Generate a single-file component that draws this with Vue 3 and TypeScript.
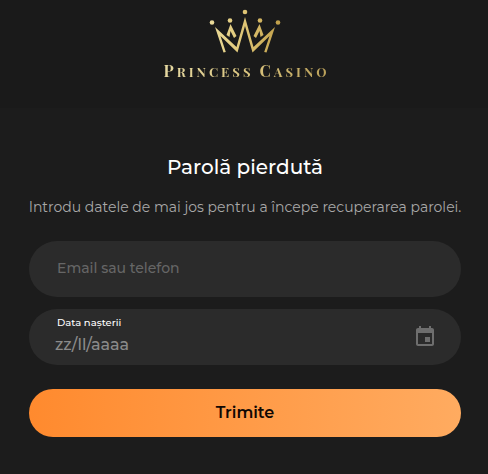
<script setup lang="ts">
import { ref } from 'vue'

const account = ref('')
const birthDate = ref('')
</script>

<template>
  <div class="page">
    <header class="header">
      <a class="brand" href="#">
        <svg class="crown" viewBox="0 0 72 44" aria-hidden="true">
          <defs>
            <linearGradient id="gold" gradientUnits="userSpaceOnUse" x1="2" y1="0" x2="70" y2="0">
              <stop offset="0" stop-color="#eadb9a" />
              <stop offset="0.5" stop-color="#dfc574" />
              <stop offset="1" stop-color="#c1a04a" />
            </linearGradient>
          </defs>
          <g fill="url(#gold)">
            <circle cx="3" cy="13.500" r="2.300" />
            <circle cx="21" cy="11.500" r="2.300" />
            <circle cx="36" cy="3" r="2.300" />
            <circle cx="51" cy="11.500" r="2.300" />
            <circle cx="69" cy="13.500" r="2.300" />
            <path d="M6 18 L27.500 38 L36 8 L44.500 38 L66 18 L57.500 43.500 L55.200 43 L60.500 27 L43.500 43.500 L36 17 L28.500 43.500 L11.500 27 L16.800 43 L14.500 43.500 Z" />
            <path d="M21.500 15 L27.500 27 L25 29 L21.500 22 L20.500 28 L17.500 26 Z" />
            <path d="M50.500 15 L44.500 27 L47 29 L50.500 22 L51.500 28 L54.500 26 Z" />
          </g>
        </svg>
        <span class="wordmark"><span class="initial">P</span>RINCESS <span class="initial">C</span>ASINO</span>
      </a>
    </header>

    <main class="content">
      <h1 class="title">Parolă pierdută</h1>
      <p class="intro">Introdu datele de mai jos pentru a începe recuperarea parolei.</p>

      <form class="form" @submit.prevent>
        <input v-model="account" class="field account" type="text" placeholder="Email sau telefon" aria-label="Email sau telefon" />
        <div class="field date">
          <div class="date-text">
            <label class="date-label" for="birth-date">Data nașterii</label>
            <input id="birth-date" v-model="birthDate" class="date-input" type="text" placeholder="zz/ll/aaaa" />
          </div>
          <button class="calendar" type="button" aria-label="Alege data">
            <svg viewBox="0 0 24 24" aria-hidden="true">
              <path fill="currentColor" d="M19 3h-1V1h-2v2H8V1H6v2H5c-1.100 0-2 .9-2 2v14c0 1.100.9 2 2 2h14c1.100 0 2-.9 2-2V5c0-1.100-.9-2-2-2zm0 16H5V8h14v11zM12 12h5v5h-5z" />
            </svg>
          </button>
        </div>
        <button class="submit" type="submit">Trimite</button>
      </form>
    </main>
  </div>
</template>

<style>
body {
  background: #1c1c1c;
}
</style>

<style scoped>
.page {
  min-height: 100vh;
  box-sizing: border-box;
  background: #1c1c1c;
  color: #fff;
  font-family: Montserrat, Inter, sans-serif;
}

.header {
  display: flex;
  justify-content: center;
  padding: 9px 0 26px;
  background: #1a1a1a;
}

.brand {
  display: flex;
  flex-direction: column;
  align-items: center;
  gap: 8px;
  padding-left: 2px;
  text-decoration: none;
}

.crown {
  display: block;
  width: 72px;
  height: 44px;
}

.wordmark {
  margin-right: -3px;
  font: 700 13px/20px "Playfair Display", "Liberation Serif", serif;
  letter-spacing: 3px;
  color: transparent;
  background: linear-gradient(90deg, #e6d9a2, #d8c27c 55%, #b99f58);
  background-clip: text;
}

.initial {
  font-size: 16px;
}

.content {
  padding: 45px 18px 37px 20px;
  text-align: center;
}

.title {
  margin: 0;
  font-size: 20px;
  line-height: 28px;
  font-weight: 500;
}

.intro {
  margin: 16px 0 24px;
  font-size: 14px;
  line-height: 20px;
  font-weight: 400;
  color: #a8a8a8;
}

.form {
  display: flex;
  flex-direction: column;
  gap: 12px;
  padding: 0 9px;
}

.field {
  box-sizing: border-box;
  width: 100%;
  height: 56px;
  border: 0;
  border-radius: 28px;
  background: #2b2b2b;
}

.account {
  padding: 0 28px 2px;
  font: 500 14px/20px Montserrat, Inter, sans-serif;
  color: #fff;
}

.account::placeholder {
  color: #666;
  opacity: 1;
}

.date {
  display: flex;
  align-items: center;
  padding: 0 24px 0 26px;
}

.date-text {
  display: flex;
  flex: 1;
  flex-direction: column;
  gap: 2px;
  min-width: 0;
  padding-bottom: 2px;
  text-align: left;
}

.date-label {
  padding-left: 2px;
  font-size: 10px;
  line-height: 16px;
  font-weight: 500;
}

.date-input {
  width: 100%;
  padding: 0;
  border: 0;
  background: none;
  font: 500 16px/24px Montserrat, Inter, sans-serif;
  color: #fff;
}

.date-input::placeholder {
  color: #8a8a8a;
  opacity: 1;
}

.field:focus,
.date-input:focus {
  outline: none;
}

.calendar {
  width: 24px;
  height: 24px;
  padding: 0;
  border: 0;
  background: none;
  color: #6e6e6e;
  cursor: pointer;
}

.calendar svg {
  display: block;
}

.submit {
  height: 48px;
  margin-top: 12px;
  border: 0;
  border-radius: 24px;
  background: linear-gradient(90deg, #ff8a2e, #ffab60);
  color: #100804;
  font: 600 16px/24px Montserrat, Inter, sans-serif;
  cursor: pointer;
}
</style>
